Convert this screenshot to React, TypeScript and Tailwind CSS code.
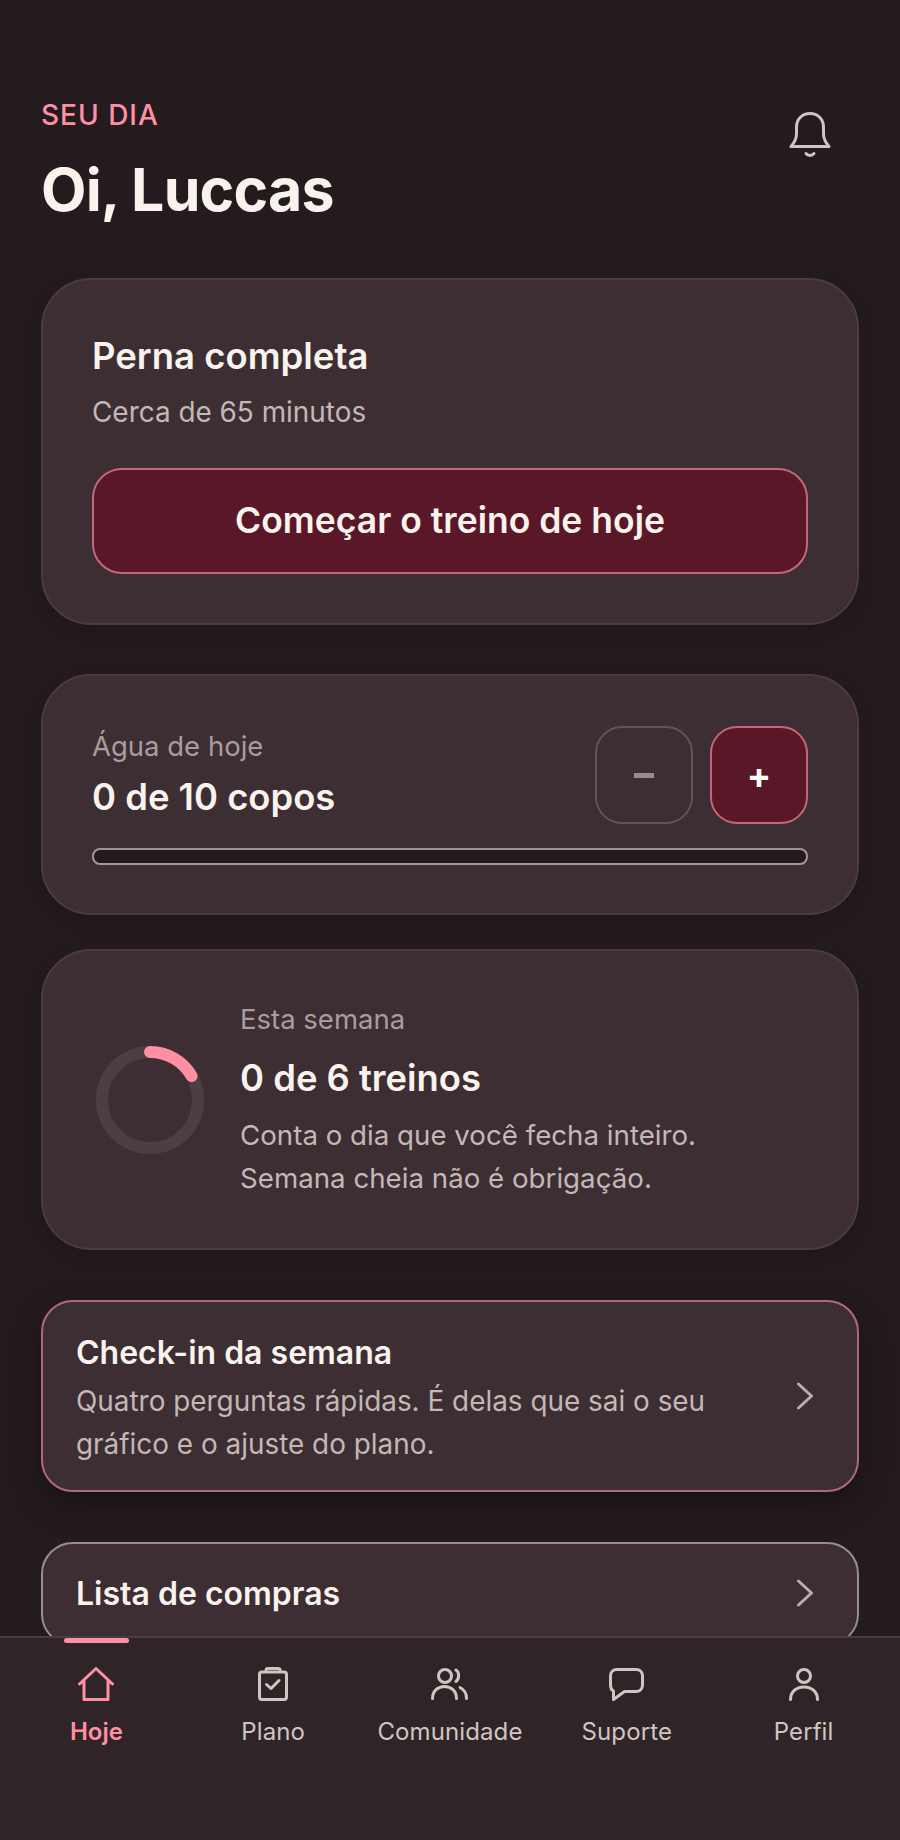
import type { ReactNode } from "react";

function BellIcon() {
    return (
        <svg viewBox="0 0 42 46" fill="none" stroke="#cdc5c1" strokeWidth="3" strokeLinecap="round" strokeLinejoin="round" className="h-[46px] w-[42px]">
            <path d="M2 34.500 H40 C37 31 34.500 28 34.500 22 V15 C34.500 7 28.500 1.500 21 1.500 C13.500 1.500 7.500 7 7.500 15 V22 C7.500 28 5 31 2 34.500 Z" />
            <path d="M17 41.500 C19 44 23 44 25 41.500" />
        </svg>
    );
}

function HomeIcon() {
    return (
        <svg viewBox="0 0 36 34" fill="none" stroke="#ff8fa3" strokeWidth="3" strokeLinecap="round" strokeLinejoin="round" className="h-[34px] w-[36px]">
            <path d="M1.500 17 L18 1.500 L34.500 17 M6 13 V32.500 H30 V13" />
        </svg>
    );
}

function PlanIcon() {
    return (
        <svg viewBox="0 0 30 34" fill="none" stroke="#cfc6c2" strokeWidth="3" strokeLinecap="round" strokeLinejoin="round" className="h-[34px] w-[30px]">
            <rect x="1.500" y="5" width="27" height="27.500" rx="2.500" />
            <path d="M8 3 C8 2 9 1.500 10 1.500 H20 C21 1.500 22 2 22 3" />
            <path d="M8.500 17.500 L13 21.500 L21 13.500" />
        </svg>
    );
}

function GroupIcon() {
    return (
        <svg viewBox="0 0 37 32" fill="none" stroke="#cfc6c2" strokeWidth="3" strokeLinecap="round" className="h-[32px] w-[37px]">
            <circle cx="14" cy="8" r="6.500" />
            <path d="M1.500 30.500 C1.500 23 7 18.500 13.500 18.500 C20 18.500 25.500 23 25.500 30.500" />
            <path d="M25 2 C28.500 4 28.500 11 25 13.500" />
            <path d="M29 19.500 C33 21.500 35.500 25.500 35.500 30.500" />
        </svg>
    );
}

function ChatIcon() {
    return (
        <svg viewBox="0 0 35 33" fill="none" stroke="#cfc6c2" strokeWidth="3" strokeLinecap="round" strokeLinejoin="round" className="h-[33px] w-[35px]">
            <path d="M8 1.500 H27 C31 1.500 33.500 4 33.500 8 V17 C33.500 21 31 23.500 27 23.500 H15.500 L4.500 31.500 V23 C2.500 22 1.500 20 1.500 17 V8 C1.500 4 4 1.500 8 1.500 Z" />
        </svg>
    );
}

function PersonIcon() {
    return (
        <svg viewBox="0 0 30 33" fill="none" stroke="#cfc6c2" strokeWidth="3" strokeLinecap="round" className="h-[33px] w-[30px]">
            <circle cx="15" cy="8" r="6.500" />
            <path d="M1.500 31.500 C1.500 24 7 19 15 19 C23 19 28.500 24 28.500 31.500" />
        </svg>
    );
}

function Chevron() {
    return (
        <svg viewBox="0 0 18 28" fill="none" stroke="#b9aeab" strokeWidth="3" strokeLinecap="round" strokeLinejoin="round" className="h-[28px] w-[18px] shrink-0">
            <path d="M2.500 2 L15.500 14 L2.500 26" />
        </svg>
    );
}

function ProgressRing() {
    return (
        <svg viewBox="0 0 116 116" fill="none" strokeWidth="12" className="h-[116px] w-[116px] shrink-0">
            <circle cx="58" cy="58" r="48" stroke="#4c3e43" />
            <path d="M58 10 A48 48 0 0 1 99.600 34" stroke="#ff8fa3" strokeLinecap="round" />
        </svg>
    );
}

function Card({ children, className }: { children: ReactNode; className: string }) {
    return (
        <section className={"rounded-[50px] border-2 border-[#4a3c41] bg-[#3c2e33] shadow-[0_6px_18px_rgba(0,0,0,0.18)] " + className}>
            {children}
        </section>
    );
}

const tabs = [
    { label: "Hoje", icon: <HomeIcon />, active: true },
    { label: "Plano", icon: <PlanIcon />, active: false },
    { label: "Comunidade", icon: <GroupIcon />, active: false },
    { label: "Suporte", icon: <ChatIcon />, active: false },
    { label: "Perfil", icon: <PersonIcon />, active: false },
];

export default function App() {
    return (
        <div className="flex h-[1840px] w-[900px] flex-col overflow-hidden bg-[#241b1f] font-['Inter',sans-serif] text-[#f8f3ec]">
            <main className="min-h-0 flex-1 overflow-hidden px-[41px] pt-[98px]">
                <header className="flex items-start justify-between">
                    <div>
                        <p className="text-[28px] leading-[34px] font-medium tracking-[1px] text-[#ff8fa3]">SEU DIA</p>
                        <h1 className="mt-[25px] text-[59px] leading-[66px] font-bold tracking-[-0.8px]">Oi, Luccas</h1>
                    </div>
                    <div className="mt-[14px] mr-[28px]">
                        <BellIcon />
                    </div>
                </header>

                <Card className="mt-[55px] px-[49px] pt-[55px] pb-[49px]">
                    <h2 className="text-[36.500px] leading-[42px] font-semibold">Perna completa</h2>
                    <p className="mt-[17px] text-[27.900px] leading-[36px] text-[#c2b8b5]">Cerca de 65 minutos</p>
                    <button className="mt-[38px] flex h-[106px] w-full items-center justify-center rounded-[30px] border-2 border-[#c4667c] bg-[#5a1728] text-[35.500px] font-semibold">
                        Começar o treino de hoje
                    </button>
                </Card>

                <Card className="mt-[49px] px-[49px] pt-[50px] pb-[48px]">
                    <div className="flex items-center justify-between">
                        <div className="-mt-[5px]">
                            <p className="text-[27.500px] leading-[34px] text-[#a99d9b]">Água de hoje</p>
                            <p className="mt-[14px] text-[36.400px] leading-[40px] font-semibold">0 de 10 copos</p>
                        </div>
                        <div className="flex gap-[17px]">
                            <button className="flex h-[98px] w-[98px] items-center justify-center rounded-[27px] border-2 border-[#62545a]">
                                <span className="h-[5px] w-[20px] bg-[#988c8e]" />
                            </button>
                            <button className="flex h-[98px] w-[98px] items-center justify-center rounded-[27px] border-2 border-[#c4667c] bg-[#5a1728] text-[36px] leading-none font-bold text-white">
                                +
                            </button>
                        </div>
                    </div>
                    <div className="mt-[24px] h-[17px] rounded-[8px] border-2 border-[#a3969a] bg-[#241b1f]" />
                </Card>

                <Card className="mt-[34px] flex items-center gap-[32px] pt-[50px] pb-[49px] pl-[49px]">
                    <ProgressRing />
                    <div>
                        <p className="text-[27.500px] leading-[36px] text-[#a99d9b]">Esta semana</p>
                        <h2 className="mt-[20px] text-[36.400px] leading-[42px] font-semibold">0 de 6 treinos</h2>
                        <p className="mt-[15px] -mb-[1px] text-[27.700px] leading-[43px] text-[#c2b8b5]">
                            Conta o dia que você fecha inteiro.
                            <br />
                            Semana cheia não é obrigação.
                        </p>
                    </div>
                </Card>

                <section className="mt-[50px] flex h-[192px] items-center justify-between rounded-[32px] border-2 border-[#b0697a] bg-[#3c2e33] pr-[43px] pl-[33px] shadow-[0_12px_32px_rgba(0,0,0,0.35)]">
                    <div className="pt-[6px]">
                        <h3 className="text-[32px] leading-[40px] font-semibold">Check-in da semana</h3>
                        <p className="mt-[7px] text-[27.900px] leading-[43px] text-[#c2b8b5]">
                            Quatro perguntas rápidas. É delas que sai o seu
                            <br />
                            gráfico e o ajuste do plano.
                        </p>
                    </div>
                    <Chevron />
                </section>

                <section className="mt-[50px] flex h-[104px] items-center justify-between rounded-[32px] border-2 border-[#9a8d90] bg-[#3c2e33] pr-[43px] pl-[33px]">
                    <h3 className="text-[32px] leading-[40px] font-semibold">Lista de compras</h3>
                    <div className="-mt-[2px] flex">
                        <Chevron />
                    </div>
                </section>
            </main>

            <nav className="grid h-[204px] shrink-0 grid-cols-5 border-t-2 border-[#4a3c41] bg-[#2f2428] px-[8px]">
                {tabs.map((tab) => (
                    <div key={tab.label} className="relative flex flex-col items-center pt-[28px]">
                        {tab.active && <span className="absolute top-0 h-[5px] w-[65px] rounded-full bg-[#ff8fa3]" />}
                        <div className="flex h-[36px] items-center justify-center">{tab.icon}</div>
                        <span className={tab.active ? "mt-[14px] text-[24px] leading-[32px] font-semibold text-[#ff8fa3]" : "mt-[14px] text-[24px] leading-[32px] tracking-[0.1px] text-[#cfc6c2]"}>
                            {tab.label}
                        </span>
                    </div>
                ))}
            </nav>
        </div>
    );
}
